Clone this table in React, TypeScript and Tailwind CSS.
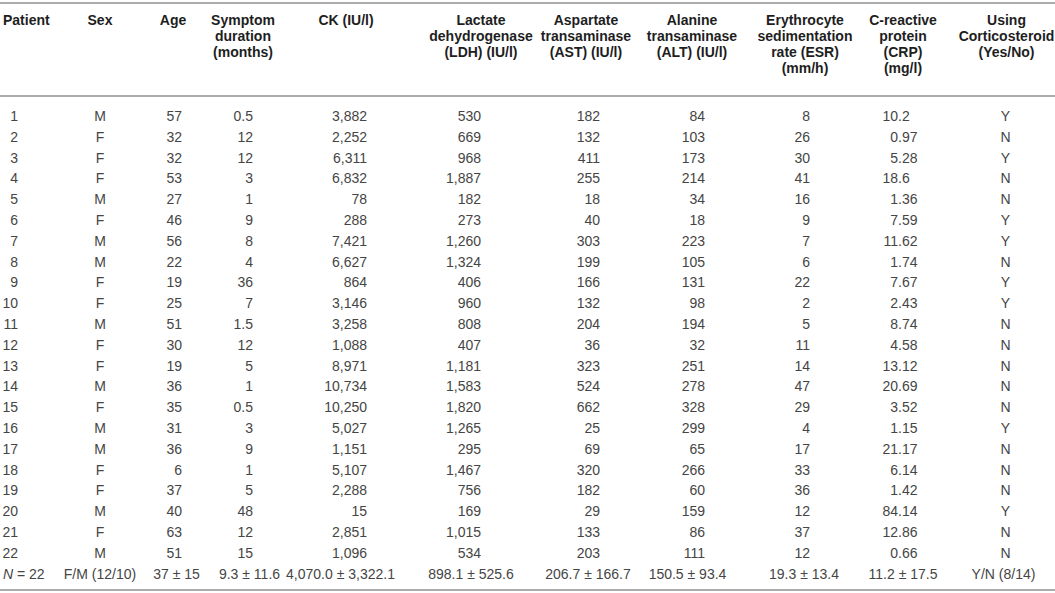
type Row = [string, string, string, string, string, string, string, string, string, string, string];

const rows: Row[] = [
  ["1", "M", "57", "0.5", "3,882", "530", "182", "84", "8", "10.2", "Y"],
  ["2", "F", "32", "12", "2,252", "669", "132", "103", "26", "0.97", "N"],
  ["3", "F", "32", "12", "6,311", "968", "411", "173", "30", "5.28", "Y"],
  ["4", "F", "53", "3", "6,832", "1,887", "255", "214", "41", "18.6", "N"],
  ["5", "M", "27", "1", "78", "182", "18", "34", "16", "1.36", "N"],
  ["6", "F", "46", "9", "288", "273", "40", "18", "9", "7.59", "Y"],
  ["7", "M", "56", "8", "7,421", "1,260", "303", "223", "7", "11.62", "Y"],
  ["8", "M", "22", "4", "6,627", "1,324", "199", "105", "6", "1.74", "N"],
  ["9", "F", "19", "36", "864", "406", "166", "131", "22", "7.67", "Y"],
  ["10", "F", "25", "7", "3,146", "960", "132", "98", "2", "2.43", "Y"],
  ["11", "M", "51", "1.5", "3,258", "808", "204", "194", "5", "8.74", "N"],
  ["12", "F", "30", "12", "1,088", "407", "36", "32", "11", "4.58", "N"],
  ["13", "F", "19", "5", "8,971", "1,181", "323", "251", "14", "13.12", "N"],
  ["14", "M", "36", "1", "10,734", "1,583", "524", "278", "47", "20.69", "N"],
  ["15", "F", "35", "0.5", "10,250", "1,820", "662", "328", "29", "3.52", "N"],
  ["16", "M", "31", "3", "5,027", "1,265", "25", "299", "4", "1.15", "Y"],
  ["17", "M", "36", "9", "1,151", "295", "69", "65", "17", "21.17", "N"],
  ["18", "F", "6", "1", "5,107", "1,467", "320", "266", "33", "6.14", "N"],
  ["19", "F", "37", "5", "2,288", "756", "182", "60", "36", "1.42", "N"],
  ["20", "M", "40", "48", "15", "169", "29", "159", "12", "84.14", "Y"],
  ["21", "F", "63", "12", "2,851", "1,015", "133", "86", "37", "12.86", "N"],
  ["22", "M", "51", "15", "1,096", "534", "203", "111", "12", "0.66", "N"],
];

const headers: string[][] = [
  ["Patient"],
  ["Sex"],
  ["Age"],
  ["Symptom", "duration", "(months)"],
  ["CK (IU/l)"],
  ["Lactate", "dehydrogenase", "(LDH) (IU/l)"],
  ["Aspartate", "transaminase", "(AST) (IU/l)"],
  ["Alanine", "transaminase", "(ALT) (IU/l)"],
  ["Erythrocyte", "sedimentation", "rate (ESR)", "(mm/h)"],
  ["C-reactive", "protein", "(CRP)", "(mg/l)"],
  ["Using", "Corticosteroid", "(Yes/No)"],
];

// header placement per column
const headCls = [
  "justify-start pl-[3px]",
  "justify-center",
  "justify-center",
  "justify-center",
  "justify-center",
  "justify-center pr-[2px]",
  "justify-center pl-[2px]",
  "justify-center pl-[4px]",
  "justify-center",
  "justify-center",
  "justify-center pl-[2px]",
];

// how each column places its data cells
const dataCls = [
  "justify-start pl-[2px]",
  "justify-center",
  "justify-end pr-[26px]",
  "justify-end pr-[25px]",
  "justify-end pr-[47px]",
  "justify-end pr-[69px]",
  "justify-end pr-[20px]",
  "justify-end pr-[55px]",
  "justify-end pr-[40px]",
  "justify-start",
  "justify-center",
];

// summary row sits a little off the data alignment
const sumCls = [
  "justify-start pl-[3px]",
  "justify-center",
  "justify-center pl-[7px]",
  "justify-center pl-[13px]",
  "justify-center pr-[11px]",
  "justify-center pr-[22px]",
  "justify-center pl-[6px]",
  "justify-center pr-[5px]",
  "justify-center pr-[2px]",
  "justify-center",
  "justify-center pr-[4px]",
];

const grid =
  "grid grid-cols-[62px_76px_70px_70px_136px_136px_70px_140px_90px_106px_99px]";

function Decimal({ value }: { value: string }) {
  const [int, frac] = value.split(".");
  return (
    <>
      <span className="inline-block w-[48px] text-right">{int}</span>
      <span>.{frac}</span>
    </>
  );
}

export default function App() {
  const summary = [
    <span key="n">
      <i>N</i> = 22
    </span>,
    "F/M (12/10)",
    "37 ± 15",
    "9.3 ± 11.6",
    "4,070.0 ± 3,322.1",
    "898.1 ± 525.6",
    "206.7 ± 166.7",
    "150.5 ± 93.4",
    "19.3 ± 13.4",
    "11.2 ± 17.5",
    "Y/N (8/14)",
  ];

  return (
    <div className="w-[1055px] h-[593px] overflow-hidden bg-white pt-[2px] font-['Liberation_Sans',Arial,sans-serif] text-[14px]">
      <div className="border-y-2 border-[#acacac]">
        {/* HEADER */}
        <div className={`${grid} h-[93px] pt-[8px] border-b-2 border-[#acacac] font-bold text-[#1e1e1e] leading-[16px]`}>
          {headers.map((lines, i) => (
            <div key={i} className={`flex items-start whitespace-nowrap ${headCls[i]}`}>
              <div className="text-center">
                {lines.map((l, j) => (
                  <div key={j}>{l}</div>
                ))}
              </div>
            </div>
          ))}
        </div>

        {/* BODY */}
        <div className="pt-[9px] pb-[5px] text-[#454545]">
          {rows.map((r, ri) => (
            <div key={ri} className={`${grid} h-[20.8px] leading-[20.8px]`}>
              {r.map((v, ci) => (
                <div key={ci} className={`flex items-center whitespace-nowrap ${dataCls[ci]}`}>
                  {ci === 0 ? (
                    <span className="inline-block w-[16px] text-right">{v}</span>
                  ) : ci === 9 ? (
                    <Decimal value={v} />
                  ) : (
                    v
                  )}
                </div>
              ))}
            </div>
          ))}
          <div className={`${grid} h-[20.8px] leading-[20.8px]`}>
            {summary.map((v, ci) => (
              <div key={ci} className={`flex items-center whitespace-nowrap ${sumCls[ci]}`}>
                {v}
              </div>
            ))}
          </div>
        </div>
      </div>
    </div>
  );
}
